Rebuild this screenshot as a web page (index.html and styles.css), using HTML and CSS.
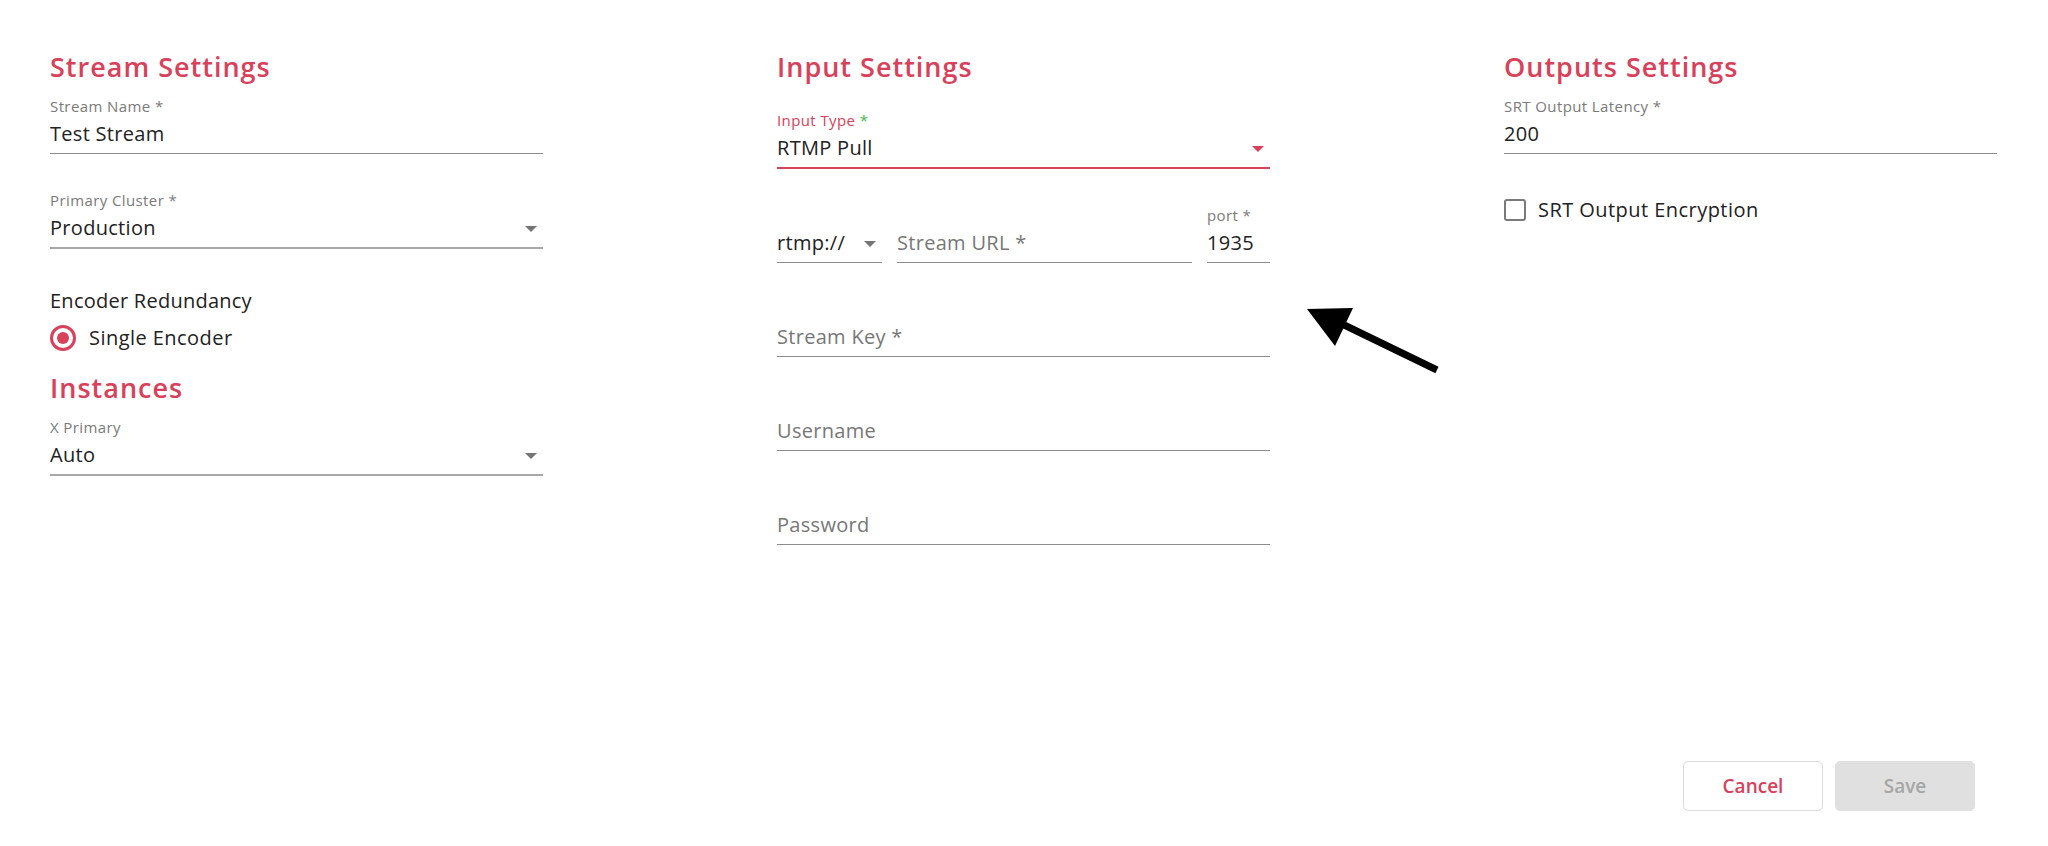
FILE: index.html
```html
<!DOCTYPE html>
<html lang="en">
<head>
<meta charset="utf-8">
<title>Stream Settings</title>
<link rel="stylesheet" href="styles.css">
</head>
<body>
<div class="page">
  <div class="columns">
    <section class="col">
      <h2 class="heading">Stream Settings</h2>
      <div class="field first">
        <div class="label">Stream Name *</div>
        <div class="control"><span class="value">Test Stream</span></div>
      </div>
      <div class="field select">
        <div class="label">Primary Cluster *</div>
        <div class="control"><span class="value">Production</span><span class="caret"></span></div>
      </div>
      <div class="group-title">Encoder Redundancy</div>
      <div class="radio-row"><span class="radio"></span><span class="option">Single Encoder</span></div>
      <h2 class="heading sub">Instances</h2>
      <div class="field first select">
        <div class="label">X Primary</div>
        <div class="control"><span class="value">Auto</span><span class="caret"></span></div>
      </div>
    </section>

    <section class="col">
      <h2 class="heading">Input Settings</h2>
      <div class="field select focused type">
        <div class="label">Input Type <span class="req">*</span></div>
        <div class="control"><span class="value">RTMP Pull</span><span class="caret"></span></div>
      </div>
      <div class="url-row">
        <div class="field select proto">
          <div class="label"></div>
          <div class="control"><span class="value">rtmp://</span><span class="caret"></span></div>
        </div>
        <div class="field url">
          <div class="label"></div>
          <div class="control"><span class="placeholder">Stream URL *</span></div>
        </div>
        <div class="field port">
          <div class="label">port *</div>
          <div class="control"><span class="value">1935</span></div>
        </div>
      </div>
      <div class="field">
        <div class="label"></div>
        <div class="control"><span class="placeholder">Stream Key *</span></div>
      </div>
      <div class="field">
        <div class="label"></div>
        <div class="control"><span class="placeholder">Username</span></div>
      </div>
      <div class="field">
        <div class="label"></div>
        <div class="control"><span class="placeholder">Password</span></div>
      </div>
    </section>

    <section class="col">
      <h2 class="heading">Outputs Settings</h2>
      <div class="field first">
        <div class="label">SRT Output Latency *</div>
        <div class="control"><span class="value">200</span></div>
      </div>
      <div class="check-row"><span class="checkbox"></span><span class="option">SRT Output Encryption</span></div>
    </section>
  </div>

  <div class="actions">
    <button class="btn cancel" type="button">Cancel</button>
    <button class="btn save" type="button" disabled>Save</button>
  </div>

  <svg class="annotation" width="2048" height="846" viewBox="0 0 2048 846" aria-hidden="true">
    <line x1="1338" y1="322" x2="1437" y2="370" stroke="#000" stroke-width="7"/>
    <polygon points="1307,309 1353,308 1335,346" fill="#000"/>
  </svg>
</div>
</body>
</html>
```

FILE: styles.css
```css
html, body {
  margin: 0;
  padding: 0;
  background: #ffffff;
}

body {
  font-family: "Open Sans", "Noto Sans", "Liberation Sans", sans-serif;
  color: #222222;
}

.page {
  position: relative;
  box-sizing: border-box;
  height: 846px;
  padding: 51px 51px 35px 50px;
  display: flex;
  flex-direction: column;
}

.columns {
  display: grid;
  grid-template-columns: repeat(3, 1fr);
  column-gap: 234px;
}

.col {
  display: flex;
  flex-direction: column;
}

.heading {
  margin: 0;
  font-size: 27px;
  line-height: 32px;
  font-weight: 600;
  letter-spacing: 1px;
  color: #d9405a;
}

.heading.sub {
  margin-top: 21px;
}

.field {
  display: flex;
  flex-direction: column;
  margin-top: 39px;
}

.field.first {
  margin-top: 16px;
}

.field.type {
  margin-top: 30px;
}

.label {
  height: 16px;
  font-size: 15px;
  line-height: 14px;
  letter-spacing: 0.4px;
  color: #7a7a7a;
  white-space: nowrap;
}

.control {
  margin-top: 5px;
  height: 28px;
  padding-bottom: 5px;
  border-bottom: 1px solid #8c8c8c;
  display: flex;
  align-items: center;
  justify-content: space-between;
  padding-right: 6px;
}

.select .control {
  border-bottom: 2px solid #a8a8a8;
}

.focused .control {
  border-bottom: 2px solid #d9405a;
}

.focused .label {
  color: #d9405a;
}

.req {
  color: #3fb950;
}

.value, .placeholder {
  font-size: 20px;
  line-height: 28px;
  letter-spacing: 0.3px;
  white-space: nowrap;
}

.value {
  color: #222222;
}

.placeholder {
  color: #777777;
}

.caret {
  width: 0;
  height: 0;
  border-left: 6px solid transparent;
  border-right: 6px solid transparent;
  border-top: 6px solid #757575;
  margin-top: 2px;
}

.focused .caret {
  border-top-color: #d9405a;
}

.url-row {
  display: flex;
  gap: 15px;
}

.url-row .field {
  margin-top: 39px;
}

.url-row .control {
  border-bottom: 1px solid #8c8c8c;
}

.proto {
  width: 105px;
  flex: none;
}

.url {
  flex: 1;
}

.port {
  width: 63px;
  flex: none;
}

.group-title {
  margin-top: 40px;
  font-size: 20px;
  line-height: 24px;
  letter-spacing: 0.25px;
  color: #222222;
}

.radio-row {
  margin-top: 12px;
  display: flex;
  align-items: center;
  gap: 13px;
  height: 26px;
}

.radio {
  box-sizing: border-box;
  width: 26px;
  height: 26px;
  border: 3px solid #d9405a;
  border-radius: 50%;
  display: flex;
  align-items: center;
  justify-content: center;
  flex: none;
}

.radio::after {
  content: "";
  width: 12px;
  height: 12px;
  border-radius: 50%;
  background: #d9405a;
}

.option {
  font-size: 20px;
  line-height: 26px;
  letter-spacing: 0.45px;
  color: #222222;
  white-space: nowrap;
}

.check-row {
  margin-top: 44px;
  display: flex;
  align-items: center;
  gap: 12px;
  height: 24px;
}

.checkbox {
  box-sizing: border-box;
  width: 22px;
  height: 22px;
  border: 2px solid #7a7a7a;
  border-radius: 3px;
  flex: none;
}

.actions {
  margin-top: auto;
  display: flex;
  justify-content: flex-end;
  gap: 12px;
  padding-right: 22px;
}

.btn {
  box-sizing: border-box;
  width: 140px;
  height: 50px;
  border-radius: 5px;
  font-family: "Open Sans", "Noto Sans", "Liberation Sans", sans-serif;
  font-size: 19px;
  font-weight: 600;
}

.cancel {
  background: #ffffff;
  border: 1px solid #dcdcdc;
  color: #d9405a;
}

.save {
  background: #e0e0e0;
  border: 1px solid #e0e0e0;
  color: #a6a6a6;
}

.annotation {
  position: absolute;
  left: 0;
  top: 0;
  pointer-events: none;
}
```
